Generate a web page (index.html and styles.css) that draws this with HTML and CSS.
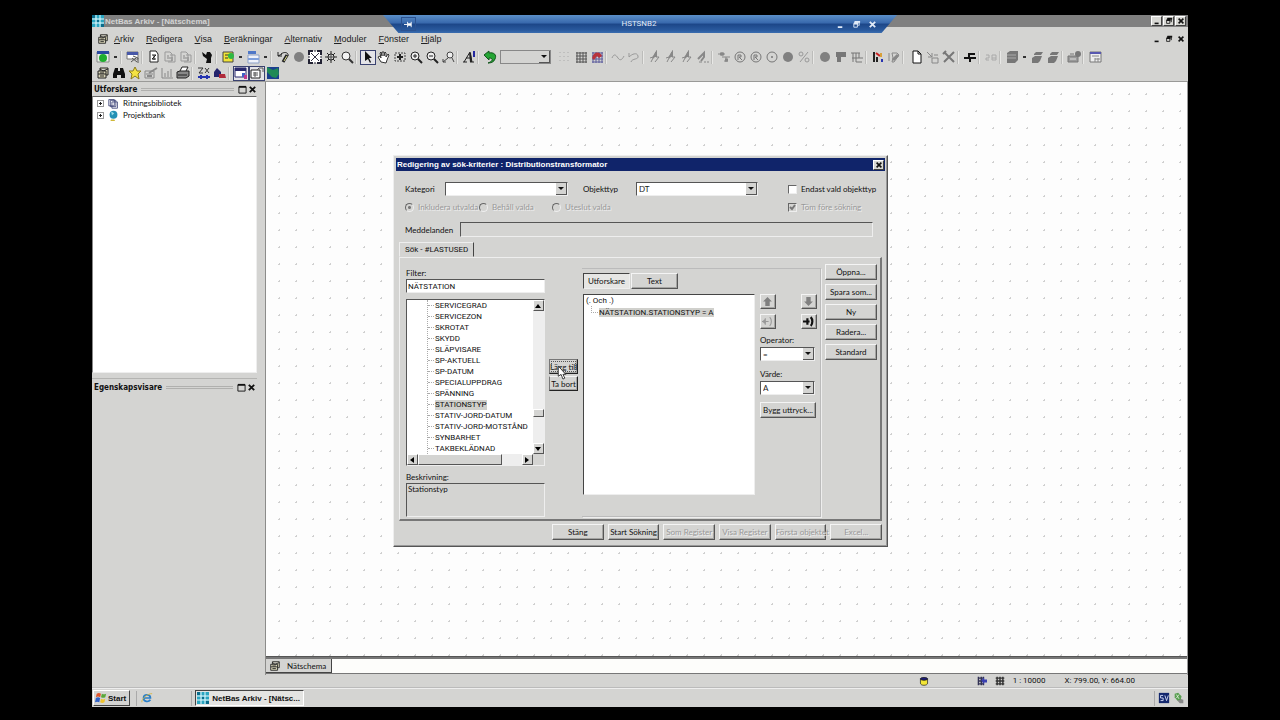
FILE: index.html
```html
<!DOCTYPE html>
<html lang="sv">
<head>
    <meta charset="UTF-8">
    <meta name="viewport" content="width=device-width, initial-scale=1.0">
    <title>NetBas Arkiv - [Nätschema]</title>
    <link rel="stylesheet" href="styles.css">
</head>
<body>

<!-- icon library -->
<svg class="library" aria-hidden="true">
    <symbol id="logo" viewBox="0 0 12 12"><rect width="12" height="12" fill="#2aa5c0"/><path d="M4 0v12M8 0v12M0 4h12M0 8h12" stroke="#e8fbff" stroke-width="1"/><path d="M0 0h3v3H0zM9 9h3v3H9zM5 5h2v2H5z" fill="#0b6c8c"/></symbol>
    <symbol id="drawer" viewBox="0 0 14 14"><path d="M2 5h8v7H2zM4 5V2h8v7h-2M2 8h8M4 3l3 2 5-2" fill="#d8d4b8" stroke="#222"/><path d="M4 7h4M4 10h4" stroke="#222"/></symbol>
    <symbol id="green-doc" viewBox="0 0 14 14"><path d="M1 2h12v10H1z" fill="#e8f0e8" stroke="#888"/><path d="M1 1h12v3H1z" fill="#2b4aa0"/><circle cx="7" cy="8" r="4" fill="#1fae2f"/></symbol>
    <symbol id="win-find" viewBox="0 0 14 14"><path d="M1 2h11v7H1z" fill="#fff" stroke="#777"/><path d="M1 2h11v3H1z" fill="#4858a8"/><path d="M6 8l5 4M7 6l5 2v5M5 12l5-4" stroke="#555" fill="none"/></symbol>
    <symbol id="doc-k" viewBox="0 0 14 14"><path d="M3 1h6l2 3v8H3z" fill="#fff" stroke="#222"/><path d="M5 5h4L5 9h4M7 5v5" stroke="#222" fill="none"/></symbol>
    <symbol id="doc-g" viewBox="0 0 14 14"><path d="M2 2h5l2 2v7H2zM7 5h5v7H5" fill="none" stroke="#999"/><path d="M4 6h2M4 8h6M8 10h2" stroke="#888"/></symbol>
    <symbol id="person" viewBox="0 0 14 14"><path d="M2 2l4 3 1-3 3 0 2 3-1 3v5H6l1-4-4-3z" fill="#111"/></symbol>
    <symbol id="yellow-doc" viewBox="0 0 14 14"><path d="M2 2h10v10H2z" fill="#f1e436" stroke="#444"/><path d="M4 5h5M4 8h3" stroke="#333"/><circle cx="10" cy="6" r="3" fill="#2fb842"/></symbol>
    <symbol id="blue-bars" viewBox="0 0 14 14"><path d="M2 1h8v3H2z" fill="#4f78c8"/><path d="M2 5h11v8H2z" fill="#eef2fa" stroke="#8ba0c8"/><path d="M2 9h11" stroke="#7fa0dc" stroke-width="2"/></symbol>
    <symbol id="redraw" viewBox="0 0 14 14"><path d="M2 2v4h4M2 6l4-2M5 4c4-3 8-1 7 2L7 12" fill="none" stroke="#222" stroke-width="1"/><path d="M11 5l-4 7" stroke="#222" stroke-width="3"/><path d="M11 6l-3 5" stroke="#d8d88a"/></symbol>
    <symbol id="ball" viewBox="0 0 14 14"><circle cx="7" cy="7" r="5" fill="#808080"/></symbol>
    <symbol id="fit" viewBox="0 0 14 14"><path d="M1 1h12v12H1z" fill="#fff"/><path d="M1 5V1h4M9 1h4v4M13 9v4H9M5 13H1V9" fill="none" stroke="#223" stroke-width="2"/><path d="M3 3l8 8M11 3l-8 8" stroke="#334"/><path d="M6 1h2M6 13h2M1 6v2M13 6v2" stroke="#223"/></symbol>
    <symbol id="burst" viewBox="0 0 14 14"><path d="M7 1v12M1 7h12M3 3l8 8M11 3l-8 8" stroke="#222"/><circle cx="7" cy="7" r="3" fill="#ddd" stroke="#222"/><path d="M7 4v6M4 7h6" stroke="#444"/></symbol>
    <symbol id="glass" viewBox="0 0 14 14"><circle cx="6" cy="6" r="4" fill="#f2f2f2" stroke="#333"/><path d="M9 9l4 4" stroke="#333" stroke-width="2"/></symbol>
    <symbol id="glass-plus" viewBox="0 0 14 14"><circle cx="6" cy="6" r="4" fill="#eee" stroke="#222"/><path d="M4 6h4M6 4v4" stroke="#222"/><path d="M9 9l4 4" stroke="#222" stroke-width="2"/></symbol>
    <symbol id="glass-minus" viewBox="0 0 14 14"><circle cx="6" cy="6" r="4" fill="#eee" stroke="#222"/><path d="M4 6h4" stroke="#222"/><path d="M9 9l4 4" stroke="#222" stroke-width="2"/></symbol>
    <symbol id="glass-prev" viewBox="0 0 14 14"><circle cx="9" cy="5" r="3" fill="#eee" stroke="#444"/><path d="M7 8l-5 4M2 9v3h3M11 8l2 4" fill="none" stroke="#444"/></symbol>
    <symbol id="arrow" viewBox="0 0 14 14"><path d="M4 1v10l3-2 2 4 1-1-2-4h3z" fill="#111"/></symbol>
    <symbol id="hand" viewBox="0 0 14 14"><path d="M4 12L1 7l2-1 1 2-1-5 1-1 1 4V2h2v4l1-4 1 1v4l2-3 1 1-2 5-1 3z" fill="#fff" stroke="#333"/></symbol>
    <symbol id="region" viewBox="0 0 14 14"><path d="M2 3h10v8H2z" fill="none" stroke="#444" stroke-dasharray="2 1"/><path d="M7 4v6M4 7h6" stroke="#222" stroke-width="2"/></symbol>
    <symbol id="text" viewBox="0 0 14 14"><path d="M1 12h4M2 12L8 2l2 10M8 12h4M4 8h5" stroke="#222" stroke-width="1" fill="none"/><path d="M8 3l1 9" stroke="#222" stroke-width="2"/><path d="M11 1h2v6h-2z" fill="#2428a0"/></symbol>
    <symbol id="undo" viewBox="0 0 14 14"><path d="M1 5l5-4v2c5-1 8 2 6 6-1 3-4 4-7 4 3-1 5-3 4-4-1-1-2-1-3-1v2z" fill="#25a535" stroke="#12541c"/></symbol>
    <symbol id="dots" viewBox="0 0 14 14"><path d="M2 2v11M6 2v11M10 2v11" stroke="#aaa" stroke-dasharray="1 3"/></symbol>
    <symbol id="grid" viewBox="0 0 14 14"><path d="M2 3h11M2 6h11M2 9h11M2 12h11M3 2v11M6 2v11M9 2v11M12 2v11" stroke="#555"/></symbol>
    <symbol id="grid-dark" viewBox="0 0 14 14"><path d="M1 3h12M1 7h12M1 11h12M3 1v12M7 1v12M11 1v12" stroke="#333" stroke-width="2"/></symbol>
    <symbol id="grid-red" viewBox="0 0 14 14"><path d="M2 3h11M2 6h11M2 9h11M2 12h11M3 2v11M6 2v11M9 2v11M12 2v11" stroke="#5a5a9c"/><path d="M2 8c2-7 8-7 10-2L9 8 7 6l-3 4z" fill="#b8323c"/></symbol>
    <symbol id="wave" viewBox="0 0 14 14"><path d="M1 8c2-5 4-3 6 0s4 2 6-2" fill="none" stroke="#999"/></symbol>
    <symbol id="heart" viewBox="0 0 14 14"><path d="M2 3v4c3-3 8-5 9-1s-6 2-7 6" fill="none" stroke="#999"/></symbol>
    <symbol id="bolt" viewBox="0 0 14 14"><path d="M3 12L8 2v5h3l-4 5M2 8l6-2" fill="none" stroke="#888" stroke-width="1"/><path d="M5 8l3-5v4" fill="none" stroke="#888" stroke-width="2"/></symbol>
    <symbol id="bolt-line" viewBox="0 0 14 14"><path d="M2 9l6-6v4l-3 4" fill="none" stroke="#888" stroke-width="2"/><path d="M3 12h3M8 12h2M11 12h2" stroke="#888"/></symbol>
    <symbol id="node" viewBox="0 0 14 14"><path d="M1 4h7M5 2v4M5 7h8M9 7v5M7 11h4" fill="none" stroke="#888" stroke-width="1"/><path d="M3 4h4M8 10h3" stroke="#888" stroke-width="3"/></symbol>
    <symbol id="ring-r" viewBox="0 0 14 14"><circle cx="7" cy="7" r="5" fill="none" stroke="#777"/><path d="M5 10V5h3v2H6l3 3" fill="none" stroke="#777"/></symbol>
    <symbol id="ring" viewBox="0 0 14 14"><circle cx="7" cy="7" r="5" fill="none" stroke="#777"/><circle cx="7" cy="7" r="1" fill="#777"/></symbol>
    <symbol id="percent" viewBox="0 0 14 14"><path d="M3 12l8-10" stroke="#999"/><circle cx="4" cy="4" r="2" fill="none" stroke="#999"/><circle cx="10" cy="10" r="2" fill="none" stroke="#999"/></symbol>
    <symbol id="flag" viewBox="0 0 14 14"><path d="M2 2h10v5H7v5H3V7H2z" fill="#777"/></symbol>
    <symbol id="pins" viewBox="0 0 14 14"><path d="M1 3h9M3 3v9M6 3v9h6M9 3v5h4M2 8h7" fill="none" stroke="#777"/></symbol>
    <symbol id="marks" viewBox="0 0 14 14"><path d="M3 2v10M6 7v5" stroke="#222" stroke-width="2"/><path d="M5 3l4 3" stroke="#c22" stroke-width="2"/><path d="M10 3v4" stroke="#d8a03a" stroke-width="2"/><path d="M11 9v3" stroke="#2833b0" stroke-width="2"/></symbol>
    <symbol id="pencil-g" viewBox="0 0 14 14"><path d="M2 3v8M5 3h5l2 2-5 7H5l1-4z" fill="none" stroke="#888" stroke-width="1"/><path d="M6 10l5-5" stroke="#888" stroke-width="3"/></symbol>
    <symbol id="page" viewBox="0 0 14 14"><path d="M3 1h5l3 3v9H3z" fill="#fff" stroke="#111"/><path d="M8 1v3h3" fill="none" stroke="#111"/></symbol>
    <symbol id="copy-g" viewBox="0 0 14 14"><path d="M1 2l5 5M6 3v4H2M6 8h6v5H6zM8 5h4" fill="none" stroke="#888"/></symbol>
    <symbol id="tools" viewBox="0 0 14 14"><path d="M2 12L12 2M2 2l10 10M1 4l3-3" stroke="#777" stroke-width="2"/></symbol>
    <symbol id="clamp" viewBox="0 0 14 14"><path d="M5 4h7M1 8h12M6 4v4M7 8v4" stroke="#111" stroke-width="2"/></symbol>
    <symbol id="link-g" viewBox="0 0 14 14"><path d="M2 5h3v3H2v2h3M8 10V5h4v5zM8 8h4" fill="none" stroke="#aaa"/></symbol>
    <symbol id="barrel" viewBox="0 0 14 14"><path d="M2 3l3-2h8v9l-3 3H2z" fill="#777"/><path d="M2 5h9M2 8h9" stroke="#aaa"/></symbol>
    <symbol id="layers" viewBox="0 0 14 14"><path d="M2 8l3-2h7l-2 5-2 2H2zM4 4l2-2h7l-2 3H4z" fill="#777"/></symbol>
    <symbol id="building" viewBox="0 0 14 14"><path d="M1 6h10v6H1z" fill="#999" stroke="#777"/><path d="M3 9h6" stroke="#ddd"/><path d="M3 4h4" stroke="#777"/><circle cx="11" cy="4" r="3" fill="#777"/></symbol>
    <symbol id="form" viewBox="0 0 14 14"><path d="M2 2h11v10H2z" fill="#eee" stroke="#777"/><path d="M2 3h11" stroke="#5858b0" stroke-width="2"/><path d="M4 6h7M7 8v4M10 8v4M7 9h5" stroke="#888" fill="none"/></symbol>
    <symbol id="binoc" viewBox="0 0 14 14"><path d="M3 2h3v3h2V2h3l2 6v4H9V9H5v3H1V8z" fill="#111"/></symbol>
    <symbol id="star" viewBox="0 0 14 14"><path d="M7 1l2 4h4l-3 3 1 5-4-3-4 3 1-5-3-3h4z" fill="#f5e342" stroke="#8a7a1c"/></symbol>
    <symbol id="edit-g" viewBox="0 0 14 14"><path d="M1 5h9v7H1zM2 8h7" fill="none" stroke="#888"/><path d="M5 7l8-5M3 10h5" fill="none" stroke="#888" stroke-width="2"/></symbol>
    <symbol id="chart" viewBox="0 0 14 14"><path d="M2 2v10h11M5 11V7M8 11V5M11 11V3" fill="none" stroke="#888" stroke-width="1"/></symbol>
    <symbol id="printer" viewBox="0 0 14 14"><path d="M4 5l2-4h6l-2 4" fill="#fff" stroke="#222"/><path d="M1 6l3-1h9v5l-3 2H1z" fill="#888" stroke="#222"/><path d="M2 9h9" stroke="#222"/></symbol>
    <symbol id="zx" viewBox="0 0 14 14"><path d="M1 2h5L2 7h4M8 2l4 5M12 2L8 7" stroke="#333" fill="none"/><path d="M1 11h12M4 9v4M10 9v4" fill="none" stroke="#2534b0" stroke-width="2"/></symbol>
    <symbol id="house-car" viewBox="0 0 14 14"><path d="M1 11V6l3-4 4 4v5z" fill="#23236c"/><path d="M6 8h6l1 4H6z" fill="#b02a3a"/></symbol>
    <symbol id="pane" viewBox="0 0 14 14"><path d="M1 2h11v9H1z" fill="#fff" stroke="#29296c"/><path d="M1 2h11v3H1z" fill="#29296c"/><path d="M8 7h3v4H8z" fill="#4060c8"/><path d="M10 9h3v4h-3z" fill="#c03a90"/></symbol>
    <symbol id="props" viewBox="0 0 14 14"><path d="M1 4h9v8H1z" fill="#fff" stroke="#222"/><path d="M3 7h5M3 9h5M5 6v5M7 4l2-2h4v4" fill="none" stroke="#555"/></symbol>
    <symbol id="map" viewBox="0 0 14 14"><path d="M1 1h12v12H1z" fill="#1a3f8e"/><path d="M1 1l6 3 5-2 1 6-3 4-4-1-5-5z" fill="#1f8a56"/></symbol>
    <symbol id="books" viewBox="0 0 14 14"><path d="M1 2h7v8H1zM3 3h7v8H3zM5 5h7v8H5z" fill="#fff" stroke="#333a70"/></symbol>
    <symbol id="globe" viewBox="0 0 14 14"><circle cx="7" cy="6" r="5" fill="#2491b5"/><path d="M4 2l4 2-3 3z" fill="#9adbe8"/><path d="M4 12h4l1 2H3z" fill="#d0b838"/></symbol>
    <symbol id="drum" viewBox="0 0 14 14"><path d="M2 4v6c0 4 10 4 10 0V4z" fill="#f2e536" stroke="#222"/><ellipse cx="7" cy="4" rx="5" ry="2" fill="#1c1c78" stroke="#111"/></symbol>
    <symbol id="snap" viewBox="0 0 14 14"><path d="M1 3h9M1 7h9M1 11h9M2 1v12M6 1v12M9 1v12" stroke="#335" stroke-width="2"/><path d="M6 6l4-4v3h4v4h-4v3z" fill="#3a40b0"/></symbol>
    <symbol id="windows" viewBox="0 0 14 14"><path d="M2 2c2-1 3-1 5 0L6 6c-2-1-3-1-5 0z" fill="#e0552c"/><path d="M8 2c2 1 3 1 5 0l-1 4c-2 1-3 1-5 0z" fill="#5aa83a"/><path d="M1 7c2-1 3-1 5 0l-1 5c-2-1-3-1-5 0z" fill="#2f62c8"/><path d="M7 8c2 1 3 1 5 0l-1 4c-2 1-3 1-5 0z" fill="#eec22e"/></symbol>
    <symbol id="ie" viewBox="0 0 14 14"><path d="M3 7h8c0-5-8-5-8 0s6 5 8 2" fill="none" stroke="#2a7fc8" stroke-width="2"/><path d="M1 12C0 8 9 1 13 2" fill="none" stroke="#d8b53a"/></symbol>
    <symbol id="lang" viewBox="0 0 14 14"><path d="M1 1h12v12H1z" fill="#14286e"/><path d="M6 4H3v3h3v3H3M8 4l2 6 2-6" fill="none" stroke="#dfe6ff"/></symbol>
    <symbol id="tray" viewBox="0 0 14 14"><path d="M6 7l6 2v4H8L5 10z" fill="#888"/><path d="M2 2l4-1 4 4-1 4-4 1-3-4z" fill="#5a9e52"/><path d="M4 3l3 5M7 3l-3 4" stroke="#dff0da"/></symbol>
    <symbol id="w-min" viewBox="0 0 10 10"><path d="M2 8h5" stroke="currentColor" stroke-width="2"/></symbol>
    <symbol id="w-rest" viewBox="0 0 10 10"><path d="M3 4V2h5v4H7" fill="none" stroke="currentColor" stroke-width="1"/><path d="M2 4h4v4H2z" fill="none" stroke="currentColor"/><path d="M2 4h5M3 2h6" stroke="currentColor" stroke-width="2"/></symbol>
    <symbol id="w-max" viewBox="0 0 10 10"><path d="M1 2h8v7H1z" fill="none" stroke="currentColor"/><path d="M1 2h8" stroke="currentColor" stroke-width="2"/></symbol>
    <symbol id="w-close" viewBox="0 0 10 10"><path d="M2 2l6 6M8 2L2 8" stroke="currentColor" stroke-width="2"/></symbol>
    <symbol id="up" viewBox="0 0 10 10"><path d="M5 1l4 4H7v4H3V5H1z" fill="#808080"/></symbol>
    <symbol id="down" viewBox="0 0 10 10"><path d="M5 9l4-4H7V1H3v4H1z" fill="#808080"/></symbol>
    <symbol id="paren" viewBox="0 0 10 10"><path d="M0 5h6M3 2v6M1 5l2-2M1 5l2 2M7 1c2 2 2 6 0 8" fill="none" stroke="currentColor" stroke-width="1"/></symbol>
    <symbol id="paren-bold" viewBox="0 0 10 10"><path d="M0 5h6M4 2v6M7 1c2 2 2 6 0 8" fill="none" stroke="currentColor" stroke-width="2"/></symbol>
    <symbol id="pin" viewBox="0 0 10 10"><path d="M0 5h4M4 2v6M8 2v6" fill="none" stroke="#fff" stroke-width="1"/><path d="M4 5h4" stroke="#fff" stroke-width="3"/></symbol>
    <symbol id="tri-l" viewBox="0 0 8 8"><path d="M6 1v6L2 4z"/></symbol>
    <symbol id="tri-r" viewBox="0 0 8 8"><path d="M2 1v6l4-3z"/></symbol>
    <symbol id="tri-u" viewBox="0 0 8 8"><path d="M1 6h6L4 2z"/></symbol>
    <symbol id="tri-d" viewBox="0 0 8 8"><path d="M1 2h6L4 6z"/></symbol>
</svg>

<div class="screen">
    <header class="titlebar">
        <svg class="icon"><use href="#logo"/></svg>
        <span class="titlebar-text">NetBas Arkiv - [Nätschema]</span>
        <div class="win-buttons">
            <button class="win-btn" aria-label="Minimera"><svg><use href="#w-min"/></svg></button>
            <button class="win-btn" aria-label="Återställ"><svg><use href="#w-rest"/></svg></button>
            <button class="win-btn" aria-label="Stäng"><svg><use href="#w-close"/></svg></button>
        </div>
    </header>

    <nav class="menubar">
        <svg class="icon"><use href="#drawer"/></svg>
        <a href="#"><u>A</u>rkiv</a>
        <a href="#"><u>R</u>edigera</a>
        <a href="#"><u>V</u>isa</a>
        <a href="#"><u>B</u>eräkningar</a>
        <a href="#"><u>A</u>lternativ</a>
        <a href="#"><u>M</u>oduler</a>
        <a href="#"><u>F</u>önster</a>
        <a href="#"><u>H</u>jälp</a>
        <div class="win-buttons plain">
            <button class="win-btn" aria-label="Minimera ritning"><svg><use href="#w-min"/></svg></button>
            <button class="win-btn" aria-label="Återställ ritning"><svg><use href="#w-rest"/></svg></button>
            <button class="win-btn" aria-label="Stäng ritning"><svg><use href="#w-close"/></svg></button>
        </div>
    </nav>

    <div class="toolbar">
        <button class="tool" aria-label="Ny ritning"><svg><use href="#green-doc"/></svg></button>
        <button class="more" aria-label="Fler"></button>
        <span class="sep"></span>
        <button class="tool" aria-label="Sök fönster"><svg><use href="#win-find"/></svg></button>
        <span class="sep"></span>
        <button class="tool" aria-label="Klipp"><svg><use href="#doc-k"/></svg></button>
        <button class="tool" aria-label="Kopiera"><svg><use href="#doc-g"/></svg></button>
        <button class="tool" aria-label="Klistra in"><svg><use href="#doc-g"/></svg></button>
        <span class="sep"></span>
        <button class="tool" aria-label="Användare"><svg><use href="#person"/></svg></button>
        <span class="sep"></span>
        <button class="tool" aria-label="Objekt"><svg><use href="#yellow-doc"/></svg></button>
        <button class="more" aria-label="Fler objekt"></button>
        <button class="tool" aria-label="Lager"><svg><use href="#blue-bars"/></svg></button>
        <button class="more" aria-label="Fler lager"></button>
        <span class="sep"></span>
        <button class="tool" aria-label="Rita om"><svg><use href="#redraw"/></svg></button>
        <button class="tool" aria-label="Stopp"><svg><use href="#ball"/></svg></button>
        <button class="tool" aria-label="Visa allt"><svg><use href="#fit"/></svg></button>
        <button class="tool" aria-label="Centrera"><svg><use href="#burst"/></svg></button>
        <button class="tool" aria-label="Förstora"><svg><use href="#glass"/></svg></button>
        <span class="sep"></span>
        <button class="tool pressed" aria-label="Markera"><svg><use href="#arrow"/></svg></button>
        <button class="tool" aria-label="Panorera"><svg><use href="#hand"/></svg></button>
        <button class="tool" aria-label="Område"><svg><use href="#region"/></svg></button>
        <button class="tool" aria-label="Zooma in"><svg><use href="#glass-plus"/></svg></button>
        <button class="tool" aria-label="Zooma ut"><svg><use href="#glass-minus"/></svg></button>
        <button class="tool" aria-label="Föregående vy"><svg><use href="#glass-prev"/></svg></button>
        <span class="sep"></span>
        <button class="tool" aria-label="Text"><svg><use href="#text"/></svg></button>
        <span class="sep"></span>
        <button class="tool" aria-label="Ångra"><svg><use href="#undo"/></svg></button>
        <select class="combo combo-tool" aria-label="Skala" disabled><option></option></select>
        <button class="tool" aria-label="Punkter"><svg><use href="#dots"/></svg></button>
        <button class="tool" aria-label="Rutnät"><svg><use href="#grid"/></svg></button>
        <button class="tool" aria-label="Fäst mot rutnät"><svg><use href="#grid-red"/></svg></button>
        <span class="sep"></span>
        <button class="tool" aria-label="Linje"><svg><use href="#wave"/></svg></button>
        <button class="tool" aria-label="Kurva"><svg><use href="#heart"/></svg></button>
        <span class="sep"></span>
        <button class="tool" aria-label="Koppla 1"><svg><use href="#bolt"/></svg></button>
        <button class="tool" aria-label="Koppla 2"><svg><use href="#bolt"/></svg></button>
        <button class="tool" aria-label="Koppla 3"><svg><use href="#bolt"/></svg></button>
        <button class="tool" aria-label="Koppla 4"><svg><use href="#bolt-line"/></svg></button>
        <span class="sep"></span>
        <button class="tool" aria-label="Nod"><svg><use href="#node"/></svg></button>
        <button class="tool" aria-label="Ring R"><svg><use href="#ring-r"/></svg></button>
        <button class="tool" aria-label="Ring Q"><svg><use href="#ring-r"/></svg></button>
        <button class="tool" aria-label="Ring"><svg><use href="#ring"/></svg></button>
        <button class="tool" aria-label="Boll"><svg><use href="#ball"/></svg></button>
        <button class="tool" aria-label="Procent"><svg><use href="#percent"/></svg></button>
        <span class="sep"></span>
        <button class="tool" aria-label="Punkt"><svg><use href="#ball"/></svg></button>
        <button class="tool" aria-label="Flagga"><svg><use href="#flag"/></svg></button>
        <button class="tool" aria-label="Schema"><svg><use href="#pins"/></svg></button>
        <span class="sep"></span>
        <button class="tool" aria-label="Färger"><svg><use href="#marks"/></svg></button>
        <button class="tool" aria-label="Ändra"><svg><use href="#pencil-g"/></svg></button>
        <span class="sep wide"></span>
        <button class="tool" aria-label="Nytt blad"><svg><use href="#page"/></svg></button>
        <button class="tool" aria-label="Flytta"><svg><use href="#copy-g"/></svg></button>
        <button class="tool" aria-label="Verktyg"><svg><use href="#tools"/></svg></button>
        <span class="sep"></span>
        <button class="tool" aria-label="Jordning"><svg><use href="#clamp"/></svg></button>
        <span class="sep"></span>
        <button class="tool" aria-label="Länka"><svg><use href="#link-g"/></svg></button>
        <span class="sep"></span>
        <button class="tool" aria-label="Databas"><svg><use href="#barrel"/></svg></button>
        <button class="more" aria-label="Fler databaser"></button>
        <button class="tool" aria-label="Skikt 1"><svg><use href="#layers"/></svg></button>
        <button class="tool" aria-label="Skikt 2"><svg><use href="#layers"/></svg></button>
        <span class="sep"></span>
        <button class="tool" aria-label="Station"><svg><use href="#building"/></svg></button>
        <span class="sep"></span>
        <button class="tool" aria-label="Formulär"><svg><use href="#form"/></svg></button>
    </div>

    <div class="toolbar">
        <button class="tool" aria-label="Arkiv"><svg><use href="#drawer"/></svg></button>
        <button class="tool" aria-label="Sök"><svg><use href="#binoc"/></svg></button>
        <button class="tool" aria-label="Favorit"><svg><use href="#star"/></svg></button>
        <button class="tool" aria-label="Redigera"><svg><use href="#edit-g"/></svg></button>
        <button class="tool" aria-label="Diagram"><svg><use href="#chart"/></svg></button>
        <button class="tool" aria-label="Skriv ut"><svg><use href="#printer"/></svg></button>
        <span class="sep"></span>
        <button class="tool" aria-label="Koordinater"><svg><use href="#zx"/></svg></button>
        <button class="tool" aria-label="Kund"><svg><use href="#house-car"/></svg></button>
        <span class="sep"></span>
        <button class="tool pressed" aria-label="Utforskare"><svg><use href="#pane"/></svg></button>
        <button class="tool pressed" aria-label="Egenskaper"><svg><use href="#props"/></svg></button>
        <button class="tool" aria-label="Karta"><svg><use href="#map"/></svg></button>
    </div>

    <main class="workspace">
        <aside class="docks">
            <section class="dock">
                <div class="dock-head">
                    <h2>Utforskare</h2><span class="grip"></span>
                    <button class="dock-btn" aria-label="Maximera"><svg><use href="#w-max"/></svg></button>
                    <button class="dock-btn" aria-label="Stäng panel"><svg><use href="#w-close"/></svg></button>
                </div>
                <ul class="explorer">
                    <li><span class="plus"></span><svg class="icon"><use href="#books"/></svg>Ritningsbibliotek</li>
                    <li><span class="plus"></span><svg class="icon"><use href="#globe"/></svg>Projektbank</li>
                </ul>
            </section>
            <section class="dock">
                <div class="dock-head">
                    <h2>Egenskapsvisare</h2><span class="grip"></span>
                    <button class="dock-btn" aria-label="Maximera"><svg><use href="#w-max"/></svg></button>
                    <button class="dock-btn" aria-label="Stäng panel"><svg><use href="#w-close"/></svg></button>
                </div>
            </section>
        </aside>
        <div class="drawing">
            <div class="canvas"></div>
            <div class="sheets">
                <button class="sheet"><svg class="icon"><use href="#drawer"/></svg>Nätschema</button>
            </div>
        </div>
    </main>

    <footer class="status">
        <svg class="icon drum"><use href="#drum"/></svg>
        <svg class="icon"><use href="#snap"/></svg>
        <svg class="icon"><use href="#grid-dark"/></svg>
        <span class="scale">1 : 10000</span>
        <span class="coords">X: 799.00, Y: 664.00</span>
    </footer>

    <div class="taskbar">
        <button class="start"><svg class="icon"><use href="#windows"/></svg>Start</button>
        <button class="quick" aria-label="Internet Explorer"><svg class="icon"><use href="#ie"/></svg></button>
        <button class="task"><svg class="icon"><use href="#logo"/></svg>NetBas Arkiv - [Nätsc...</button>
        <div class="tray">
            <svg class="icon"><use href="#lang"/></svg>
            <svg class="icon"><use href="#tray"/></svg>
        </div>
    </div>

    <div class="remote">
        <button class="remote-pin" aria-label="Fäst"><svg><use href="#pin"/></svg></button>
        <span class="remote-name">HSTSNB2</span>
        <div class="remote-buttons">
            <button aria-label="Minimera session"><svg><use href="#w-min"/></svg></button>
            <button aria-label="Återställ session"><svg><use href="#w-rest"/></svg></button>
            <button aria-label="Stäng session"><svg><use href="#w-close"/></svg></button>
        </div>
    </div>

    <form class="dialog">
        <div class="dialog-title">
            <h1>Redigering av sök-kriterier : Distributionstransformator</h1>
            <button type="button" class="win-btn" aria-label="Stäng dialog"><svg><use href="#w-close"/></svg></button>
        </div>

        <div class="criteria">
            <label for="kategori">Kategori</label>
            <select id="kategori" class="combo"><option></option></select>
            <label for="objekttyp" class="second">Objekttyp</label>
            <select id="objekttyp" class="combo"><option>DT</option></select>
            <label class="check"><input type="checkbox">Endast vald objekttyp</label>
        </div>
        <div class="criteria modes">
            <label class="check off"><input type="radio" name="lage" checked disabled>Inkludera utvalda</label>
            <label class="check off"><input type="radio" name="lage" disabled>Behåll valda</label>
            <label class="check off"><input type="radio" name="lage" disabled>Uteslut valda</label>
            <label class="check off"><input type="checkbox" checked disabled>Töm före sökning</label>
        </div>
        <div class="message">
            <label for="meddelanden">Meddelanden</label>
            <input id="meddelanden" class="field" type="text" readonly>
        </div>

        <div class="tabs"><button type="button" class="tab">Sök - #LASTUSED</button></div>
        <div class="page">
            <div class="fields">
                <label for="filter">Filter:</label>
                <input id="filter" class="field white" type="text" value="NÄTSTATION">
                <div class="tree-box">
                    <ul class="tree">
                        <li>SERVICEGRAD</li>
                        <li>SERVICEZON</li>
                        <li>SKROTAT</li>
                        <li>SKYDD</li>
                        <li>SLÄPVISARE</li>
                        <li>SP-AKTUELL</li>
                        <li>SP-DATUM</li>
                        <li>SPECIALUPPDRAG</li>
                        <li>SPÄNNING</li>
                        <li><mark>STATIONSTYP</mark></li>
                        <li>STATIV-JORD-DATUM</li>
                        <li>STATIV-JORD-MOTSTÅND</li>
                        <li>SYNBARHET</li>
                        <li>TAKBEKLÄDNAD</li>
                    </ul>
                    <div class="vscroll">
                        <button type="button" aria-label="Upp"><svg><use href="#tri-u"/></svg></button>
                        <span class="thumb"></span>
                        <button type="button" aria-label="Ned"><svg><use href="#tri-d"/></svg></button>
                    </div>
                    <div class="hscroll">
                        <button type="button" aria-label="Vänster"><svg><use href="#tri-l"/></svg></button>
                        <span class="thumb"></span>
                        <button type="button" aria-label="Höger"><svg><use href="#tri-r"/></svg></button>
                    </div>
                    <span class="corner"></span>
                </div>
                <label for="beskrivning">Beskrivning:</label>
                <textarea id="beskrivning" class="field" readonly>Stationstyp</textarea>
            </div>

            <div class="transfer">
                <button type="button" class="btn dark focused">Lägg till</button>
                <button type="button" class="btn dark">Ta bort</button>
            </div>

            <div class="query">
                <div class="view-tabs">
                    <button type="button" class="btn sunken">Utforskare</button>
                    <button type="button" class="btn">Text</button>
                </div>
                <div class="query-body">
                    <ul class="expression">
                        <li>(. Och .)</li>
                        <li class="child"><mark>NÄTSTATION.STATIONSTYP = A</mark></li>
                    </ul>
                    <div class="side">
                        <div class="pair">
                            <button type="button" class="btn small" aria-label="Flytta upp"><svg><use href="#up"/></svg></button>
                            <button type="button" class="btn small" aria-label="Flytta ned"><svg><use href="#down"/></svg></button>
                        </div>
                        <div class="pair">
                            <button type="button" class="btn small" aria-label="Ta bort parentes" disabled><svg><use href="#paren"/></svg></button>
                            <button type="button" class="btn small" aria-label="Lägg till parentes"><svg><use href="#paren-bold"/></svg></button>
                        </div>
                        <label for="operator">Operator:</label>
                        <select id="operator" class="combo"><option>=</option></select>
                        <label for="varde">Värde:</label>
                        <select id="varde" class="combo"><option>A</option></select>
                        <button type="button" class="btn">Bygg uttryck...</button>
                    </div>
                </div>
            </div>

            <div class="commands">
                <button type="button" class="btn">Öppna...</button>
                <button type="button" class="btn">Spara som...</button>
                <button type="button" class="btn">Ny</button>
                <button type="button" class="btn">Radera...</button>
                <button type="button" class="btn">Standard</button>
            </div>
        </div>

        <div class="actions">
            <button type="button" class="btn">Stäng</button>
            <button type="button" class="btn">Start Sökning</button>
            <button type="button" class="btn" disabled>Som Register</button>
            <button type="button" class="btn" disabled>Visa Register</button>
            <button type="button" class="btn" disabled>Första objektet</button>
            <button type="button" class="btn" disabled>Excel...</button>
        </div>

        <svg class="pointer" viewBox="0 0 10 16"><path d="M1 1v11l3-2 2 5 2-1-2-4h3z" fill="#fff" stroke="#333"/></svg>
    </form>
</div>

</body>
</html>
```
FILE: styles.css
```css
* {
    box-sizing: border-box;
}
body {
    margin: 0;
    height: 100vh;
    padding: 15px 92px 13px;
    background: #000;
    font-family: Lato, "Liberation Sans", Arial, sans-serif;
    font-size: 8px;
    line-height: 10px;
    color: #111;
}
button, input, select, textarea {
    font: inherit;
    color: inherit;
    margin: 0;
    padding: 0;
    border: 0;
    border-radius: 0;
    background: none;
}
ul, h1, h2 {
    margin: 0;
    padding: 0;
    list-style: none;
    font-size: inherit;
}
mark {
    background: #d0d0cc;
    color: inherit;
}
.library {
    position: absolute;
    width: 0;
    height: 0;
}
.icon {
    width: 12px;
    height: 12px;
    flex: none;
}
.screen {
    position: relative;
    height: 100%;
    display: flex;
    flex-direction: column;
    background: #d4d4d2;
}

/* main window */
.titlebar {
    display: flex;
    align-items: center;
    height: 12px;
    padding: 0 2px 0 0;
    background: #808080;
}
.titlebar-text {
    margin-left: 1px;
    font: bold 8px "Liberation Sans", Arial, sans-serif;
    color: #d4d4d4;
}
.win-buttons {
    display: flex;
    margin-left: auto;
    gap: 1px;
}
.win-btn {
    display: flex;
    align-items: center;
    justify-content: center;
    width: 11px;
    height: 10px;
    background: #d8d8d4;
    border: 1px solid;
    border-color: #fff #404040 #404040 #fff;
    color: #111;
}
.win-btn svg {
    width: 8px;
    height: 8px;
    flex: none;
}
.plain .win-btn {
    background: none;
    border-color: transparent;
}
.menubar {
    display: flex;
    align-items: center;
    height: 22px;
    padding: 2px 2px 0 5px;
    gap: 12px;
    font-family: "Liberation Sans", Arial, sans-serif;
    font-size: 9px;
}
.menubar a {
    color: #222;
    text-decoration: none;
}
.menubar .icon {
    margin-right: -7px;
}
.toolbar {
    display: flex;
    align-items: center;
    height: 16px;
    padding-left: 3px;
}
.tool {
    display: flex;
    align-items: center;
    justify-content: center;
    width: 16px;
    height: 15px;
    flex: none;
}
.tool svg {
    width: 14px;
    height: 14px;
    flex: none;
}
.tool.pressed {
    border: 1px solid #3a4270;
    background: #e4e4e8;
}
.more {
    width: 9px;
    height: 15px;
    background: linear-gradient(#333, #333) center / 3px 2px no-repeat;
}
.sep {
    width: 5px;
    height: 13px;
    border-left: 1px solid #bcbcba;
    box-shadow: inset 1px 0 #e8e8e6;
    flex: none;
}
.sep.wide {
    width: 7px;
}
.workspace {
    flex: 1;
    min-height: 0;
    display: flex;
    border-top: 1px solid #9a9a98;
}
.docks {
    width: 174px;
    display: flex;
    flex-direction: column;
    border-right: 1px solid #8c8c8a;
}
.dock:first-child {
    flex: 1;
    display: flex;
    flex-direction: column;
}
.dock:last-child {
    flex: 1 1 6px;
    border-top: 1px solid #b4b4b2;
    margin: 5px 8px 0 0;
    padding-top: 2px;
}
.dock-head {
    display: flex;
    align-items: center;
    height: 14px;
    padding: 0 7px 0 2px;
}
.dock:last-child .dock-head {
    height: 13px;
    padding-right: 0;
}
.dock-head h2 {
    font: bold 8px "DejaVu Sans Condensed", "DejaVu Sans", sans-serif;
}
.grip {
    flex: 1;
    height: 3px;
    margin: 0 4px;
    border: solid #b0b0ae;
    border-width: 1px 0;
}
.dock-btn {
    width: 10px;
    height: 10px;
}
.dock-btn svg {
    display: block;
    width: 9px;
    height: 9px;
}
.explorer {
    flex: 1;
    margin-right: 8px;
    background: #fff;
    border: 1px solid;
    border-color: #666 #eee #eee #888;
}
.explorer li {
    display: flex;
    align-items: center;
    height: 12px;
    padding-left: 4px;
    gap: 4px;
}
.explorer .icon {
    width: 11px;
    height: 11px;
}
.plus {
    width: 7px;
    height: 7px;
    border: 1px solid #999;
    background:
        linear-gradient(#222, #222) center / 3px 1px no-repeat,
        linear-gradient(#222, #222) center / 1px 3px no-repeat;
}
.drawing {
    flex: 1;
    display: flex;
    flex-direction: column;
    border-right: 1px solid #999;
}
.canvas {
    flex: 1;
    background: #fdfdfd radial-gradient(#d0d0d0 1px, transparent 1px) 5px 4px / 17px 17px;
    border-bottom: 1px solid #555;
}
.sheets {
    display: flex;
    height: 17px;
    margin-bottom: 1px;
    background: #fdfdfb;
    border: solid #777;
    border-width: 2px 0 1px;
}
.sheet {
    display: flex;
    align-items: center;
    gap: 6px;
    padding: 0 5px 0 3px;
    background: #d4d4d2;
    border-right: 1px solid #444;
    border-bottom: 1px solid #444;
}
.status {
    display: flex;
    align-items: center;
    height: 13px;
    padding-right: 53px;
    justify-content: flex-end;
    font-family: Roboto, sans-serif;
    border-bottom: 1px solid #bbb;
}
.status .icon {
    width: 10px;
    height: 10px;
    margin-right: 8px;
}
.status .drum {
    margin-right: 48px;
}
.scale {
    margin-right: 19px;
}
.taskbar {
    display: flex;
    align-items: center;
    height: 19px;
    border-top: 1px solid #eee;
    padding-left: 1px;
    font: bold 8px "Liberation Sans", Arial, sans-serif;
}
.start, .task {
    display: flex;
    align-items: center;
    height: 16px;
    padding: 0 3px 0 1px;
    gap: 1px;
    border: 1px solid;
    border-color: #fff #444 #444 #fff;
    white-space: nowrap;
}
.quick {
    display: flex;
    align-items: center;
    width: 56px;
    height: 15px;
    margin: 0 3px 0 6px;
    padding-left: 4px;
    border: solid #aaa;
    border-width: 0 1px;
}
.task {
    gap: 3px;
    min-width: 109px;
    background: #e4e4e2;
    border-color: #444 #fff #fff #444;
}
.tray {
    display: flex;
    align-items: center;
    gap: 3px;
    height: 15px;
    margin-left: auto;
    padding: 0 3px;
    border-left: 1px solid #aaa;
}

/* remote session bar lies on top of the title bar */
.remote {
    position: absolute;
    top: 0;
    left: 50%;
    width: 514px;
    height: 18px;
    margin-left: -257px;
    display: grid;
    grid-template-columns: 1fr auto 1fr;
    align-items: center;
    padding: 0 20px 0 18px;
    background: linear-gradient(#5b8fc8, #3868ac 45%, #1c4688 50%, #2a5a9e 85%, #3a6db0);
    clip-path: polygon(0 0, 100% 0, 97% 100%, 3% 100%);
    font-family: Roboto, sans-serif;
    color: #e0eaf8;
}
.remote svg {
    display: block;
    width: 9px;
    height: 9px;
}
.remote-pin {
    width: 15px;
    height: 14px;
    padding: 2px;
    border: 1px solid #2c5290;
}
.remote-buttons {
    display: flex;
    gap: 7px;
    justify-content: flex-end;
}

/* search dialog */
.dialog {
    position: absolute;
    top: 140px;
    left: 301px;
    width: 495px;
    padding: 2px;
    background: #d4d4d2;
    border: 1px solid;
    border-color: #eee #555 #555 #eee;
    box-shadow: inset -1px -1px #999;
}
.dialog-title {
    display: flex;
    align-items: center;
    justify-content: space-between;
    height: 13px;
    padding: 0 1px 0 1px;
    background: #10246a;
    color: #fff;
}
.dialog-title h1 {
    font: bold 8px "Liberation Sans", Arial, sans-serif;
}
.criteria {
    display: grid;
    grid-template-columns: 40px 123px 68px 122px 1fr;
    align-items: center;
    height: 14px;
    margin-top: 11px;
    padding-left: 9px;
}
.criteria .second {
    padding-left: 15px;
}
.criteria > .check:last-child {
    padding-left: 30px;
}
.combo {
    appearance: none;
    width: 100%;
    height: 14px;
    padding-left: 2px;
    border: 1px solid;
    border-color: #555 #eee #eee #555;
    background: #fff url("data:image/svg+xml,%3Csvg xmlns='http://www.w3.org/2000/svg' width='11' height='12'%3E%3Cpath d='M0 0h11v12H0z' fill='%23555'/%3E%3Cpath d='M0 0h10v11H0z' fill='%23d4d4d2'/%3E%3Cpath d='M2 4h6L5 7z' fill='%23111'/%3E%3C/svg%3E") right center no-repeat;
    color: #222;
}
.combo-tool {
    width: 51px;
    margin: 0 6px 0 2px;
    background-color: #d4d4d2;
    border-color: #888;
    opacity: 1;
}
.check {
    display: flex;
    align-items: center;
    gap: 4px;
    white-space: nowrap;
}
.check.off {
    color: #999;
    text-shadow: 1px 1px #eee;
}
.check input {
    appearance: none;
    width: 9px;
    height: 9px;
    background: #fff;
    border: 1px solid;
    border-color: #666 #eee #eee #666;
}
.check input[type="radio"] {
    border-radius: 50%;
}
.check input:disabled {
    background: #d4d4d2;
}
.check input[type="radio"]:checked {
    background: radial-gradient(#777 1px, #d4d4d2 2px);
}
.check input[type="checkbox"]:checked {
    background: url("data:image/svg+xml,%3Csvg xmlns='http://www.w3.org/2000/svg' width='7' height='7'%3E%3Cpath d='M1 3l2 2 3-4' fill='none' stroke='%23777' stroke-width='2'/%3E%3C/svg%3E") center no-repeat;
}
.modes {
    grid-template-columns: 74px 73px 205px 1fr;
    margin-top: 4px;
}
.criteria.modes > .check:last-child {
    padding-left: 31px;
}
.message {
    display: grid;
    grid-template-columns: 55px 1fr;
    align-items: center;
    margin-top: 8px;
    padding: 0 12px 0 9px;
}
.field {
    display: block;
    width: 100%;
    height: 15px;
    padding: 0 1px;
    border: 1px solid;
    border-color: #555 #eee #eee #555;
}
.field.white {
    height: 14px;
    background: #fff;
}
.tabs {
    display: flex;
    margin: 5px 3px 0;
}
.tab {
    height: 15px;
    padding: 0 5px;
    border: 1px solid;
    border-color: #eee #444 transparent #eee;
}
.tab, .field.white, .tree, .expression {
    font-family: Roboto, "Liberation Sans", Arial, sans-serif;
}
.page {
    display: grid;
    grid-template-columns: 139px 29px 239px 52px;
    gap: 4px;
    margin: 0 3px;
    padding: 6px 3px 2px 6px;
    border: solid;
    border-width: 1px 2px 2px 1px;
    border-color: #eee #777 #777 #eee;
}
.fields {
    display: flex;
    flex-direction: column;
    padding-top: 4px;
}
.fields > label {
    height: 11px;
}
.tree-box {
    display: grid;
    grid-template-columns: 1fr 11px;
    margin: 6px 0;
    background: #fff;
    border: 1px solid;
    border-color: #555 #eee #eee #555;
}
.tree {
    margin-left: 20px;
    border-left: 1px dotted #aaa;
}
.tree li {
    display: flex;
    align-items: center;
    height: 11px;
    white-space: nowrap;
}
.tree li::before {
    content: "";
    width: 6px;
    margin-right: 1px;
    border-top: 1px dotted #aaa;
}
.vscroll, .hscroll {
    display: flex;
    justify-content: space-between;
    background: #eee;
}
.vscroll {
    flex-direction: column;
}
.hscroll {
    height: 11px;
}
.corner {
    background: #d4d4d2;
}
.vscroll button, .hscroll button, .thumb {
    width: 11px;
    height: 11px;
    background: #d4d4d2;
    border: 1px solid;
    border-color: #fff #555 #555 #fff;
}
.vscroll svg, .hscroll svg {
    display: block;
    width: 8px;
    height: 8px;
}
.vscroll .thumb {
    height: 8px;
    margin-top: 72px;
}
.hscroll .thumb {
    flex: 1;
    margin-right: 20px;
}
textarea.field {
    height: 34px;
    resize: none;
}
.transfer {
    display: flex;
    flex-direction: column;
    gap: 2px;
    padding-top: 95px;
}
.btn {
    height: 16px;
    white-space: nowrap;
    text-align: center;
    border: 1px solid;
    border-color: #f4f4f4 #555 #555 #f4f4f4;
    box-shadow: inset -1px -1px #a4a4a2;
}
.btn:disabled {
    color: #999;
    text-shadow: 1px 1px #eee;
}
.btn.dark {
    height: 15px;
    border-color: #f4f4f4 #222 #222 #777;
}
.btn.focused {
    border-color: #777 #222 #222 #777;
    outline: 1px dotted #555;
    outline-offset: -3px;
}
.btn.sunken {
    background: #e6e6e4;
    border-color: #444 #eee #eee #444;
    box-shadow: none;
}
.btn.small {
    width: 16px;
    height: 15px;
    padding: 1px;
}
.btn.small svg {
    display: block;
    width: 11px;
    height: 11px;
}
.query {
    margin-top: 4px;
    padding: 4px 3px 0 1px;
    border: solid #bbb;
    border-width: 1px 1px 1px 0;
    box-shadow: 1px 1px #eee;
}
.view-tabs {
    display: flex;
    gap: 1px;
}
.view-tabs .btn {
    width: 47px;
}
.query-body {
    display: flex;
    gap: 5px;
    margin-top: 5px;
}
.expression {
    flex: 1;
    height: 201px;
    padding: 1px 2px;
    background: #fff;
    border: 1px solid;
    border-color: #444 #eee #eee #444;
}
.expression li {
    height: 11px;
    line-height: 9px;
    white-space: nowrap;
}
.expression .child {
    display: flex;
    align-items: center;
    padding-left: 5px;
}
.expression .child::before {
    content: "";
    width: 6px;
    height: 6px;
    margin: -6px 1px 0 0;
    border: dotted #aaa;
    border-width: 0 0 1px 1px;
}
.side {
    display: flex;
    flex-direction: column;
    width: 57px;
}
.pair {
    display: flex;
    justify-content: space-between;
    margin-bottom: 5px;
}
.side label {
    margin-top: 1px;
    height: 12px;
}
.side .combo {
    width: 55px;
    margin-bottom: 7px;
}
.side > .btn {
    width: 56px;
}
.commands {
    display: flex;
    flex-direction: column;
    gap: 4px;
}
.actions {
    display: flex;
    gap: 4px;
    margin-left: 156px;
    padding: 3px 3px 4px 0;
}
.actions .btn {
    flex: 1 1 0;
    min-width: 0;
}
.pointer {
    position: absolute;
    left: 163px;
    top: 209px;
    width: 10px;
    height: 15px;
}
```
